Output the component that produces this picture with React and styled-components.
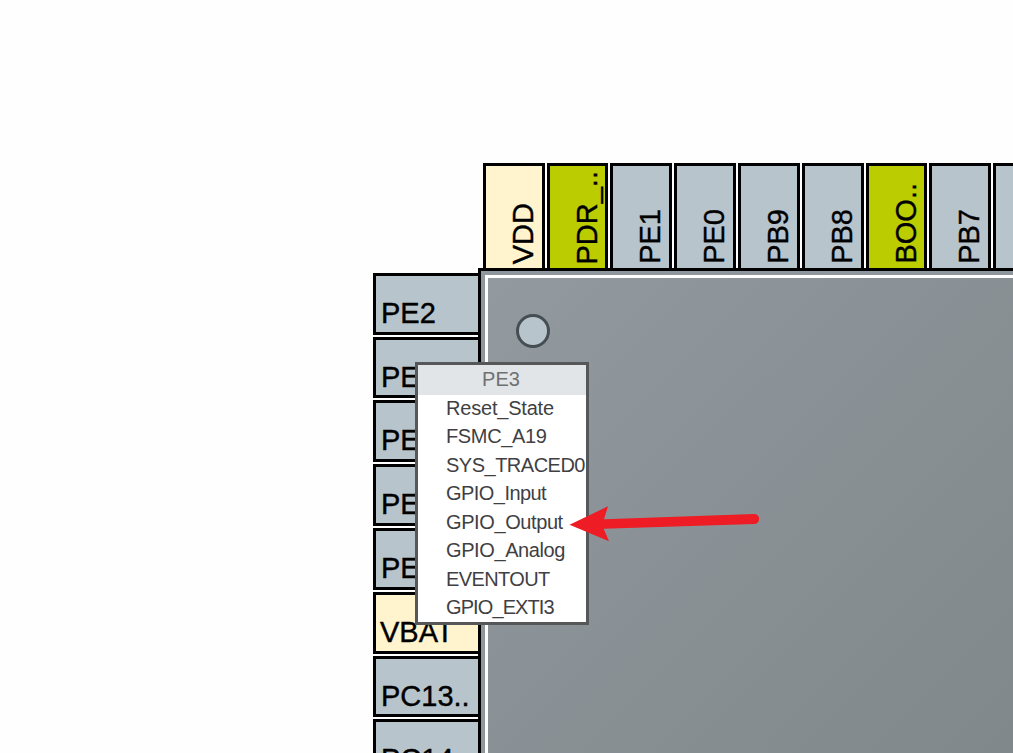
import styled, { createGlobalStyle } from 'styled-components'

const GlobalStyle = createGlobalStyle`
  * { box-sizing: border-box; }
  body {
    margin: 0;
    background: #fff;
    overflow: hidden;
    font-family: 'Liberation Sans', Arial, sans-serif;
  }
`

const COLORS = {
  io: '#b8c4cb',
  power: '#fff4cd',
  system: '#bbcc00',
}

const Canvas = styled.main`
  position: relative;
  width: 1013px;
  height: 753px;
  padding: 163px 0 0 373px;
  overflow: hidden;
  background: #fefefe;
`

const TopPins = styled.div`
  display: flex;
  gap: 2px;
  height: 105px;
  width: 640px;
  padding-left: 109.9px;
`

const TopPin = styled.div`
  flex: 0 0 61.8px;
  height: 108px;
  display: flex;
  align-items: flex-end;
  padding: 0 0 4px 21px;
  border: 3px solid #000;
  background: ${p => COLORS[p.$kind]};
`

const TopLabel = styled.span`
  writing-mode: vertical-rl;
  transform: rotate(180deg);
  font-size: 29px;
  line-height: 32px;
  white-space: nowrap;
  color: #000;
  -webkit-text-stroke: 0.4px #000;
`

const Board = styled.div`
  display: flex;
  align-items: flex-start;
`

const LeftPins = styled.div`
  display: flex;
  flex: 0 0 105px;
  flex-direction: column;
  gap: 2px;
  min-width: 0;
  padding-top: 4.8px;
`

const LeftPin = styled.div`
  flex: 0 0 61.8px;
  width: 108px;
  padding: 20px 0 0 ${p => (p.$kind === 'power' ? 4 : 5)}px;
  border: 3px solid #000;
  background: ${p => COLORS[p.$kind]};
  font-size: 29px;
  line-height: 34px;
  white-space: nowrap;
  color: #000;
  -webkit-text-stroke: 0.4px #000;
`

const Chip = styled.div`
  position: relative;
  flex: none;
  width: 800px;
  height: 800px;
  padding: 4px;
  border: 3px solid #000;
  background: #8f979d;
`

const ChipFace = styled.div`
  width: 100%;
  height: 100%;
  padding: 36px 0 0 28px;
  border: 3px solid #fff;
  background: linear-gradient(135deg, #92999f 0%, #80888b 64%, #767e80 100%);
`

const PinOneDot = styled.div`
  width: 34px;
  height: 34px;
  border: 3px solid #454e52;
  border-radius: 50%;
  background: #b8c4cb;
`

const Menu = styled.div`
  position: absolute;
  left: 415px;
  top: 362px;
  width: 174px;
  height: 263px;
  border: 3px solid #555758;
  background: #fff;
  overflow: hidden;
`

const MenuTitle = styled.div`
  height: 29.5px;
  padding-right: 2px;
  line-height: 29px;
  font-size: 20px;
  text-align: center;
  color: #6f7072;
  background: #e1e5e8;
`

const MenuItem = styled.div`
  height: 28.5px;
  padding-left: 28px;
  line-height: 27px;
  font-size: 20px;
  letter-spacing: ${p => p.$tracking}px;
  white-space: nowrap;
  color: #3f3f44;
`

const Arrow = styled.svg`
  position: absolute;
  left: 565px;
  top: 500px;
`

const topPins = [
  ['VDD', 'power'],
  ['PDR_..', 'system'],
  ['PE1', 'io'],
  ['PE0', 'io'],
  ['PB9', 'io'],
  ['PB8', 'io'],
  ['BOO..', 'system'],
  ['PB7', 'io'],
  ['', 'io'],
]

const leftPins = [
  ['PE2', 'io'],
  ['PE3', 'io'],
  ['PE4', 'io'],
  ['PE5', 'io'],
  ['PE6', 'io'],
  ['VBAT', 'power'],
  ['PC13..', 'io'],
  ['PC14..', 'io'],
]

const functions = [
  ['Reset_State', -0.2],
  ['FSMC_A19', -0.35],
  ['SYS_TRACED0', -0.5],
  ['GPIO_Input', -0.55],
  ['GPIO_Output', -0.4],
  ['GPIO_Analog', -0.4],
  ['EVENTOUT', -0.6],
  ['GPIO_EXTI3', -0.9],
]

export default function App() {
  return (
    <>
      <GlobalStyle />
      <Canvas>
        <TopPins>
          {topPins.map(([name, kind], i) => (
            <TopPin key={i} $kind={kind}>
              <TopLabel>{name}</TopLabel>
            </TopPin>
          ))}
        </TopPins>
        <Board>
          <LeftPins>
            {leftPins.map(([name, kind]) => (
              <LeftPin key={name} $kind={kind}>{name}</LeftPin>
            ))}
          </LeftPins>
          <Chip>
            <ChipFace>
              <PinOneDot />
            </ChipFace>
          </Chip>
        </Board>
        <Menu>
          <MenuTitle>PE3</MenuTitle>
          {functions.map(([name, tracking]) => (
            <MenuItem key={name} $tracking={tracking}>{name}</MenuItem>
          ))}
        </Menu>
        <Arrow width="200" height="50" viewBox="0 0 200 50">
          <path
            d="M4.5 24.8 L43 6.3 L39 19.2 L189 14 A5 5 0 0 1 189.3 24 L38.7 28.8 L44 41.3 Z"
            fill="#ee1c25"
          />
        </Arrow>
      </Canvas>
    </>
  )
}
